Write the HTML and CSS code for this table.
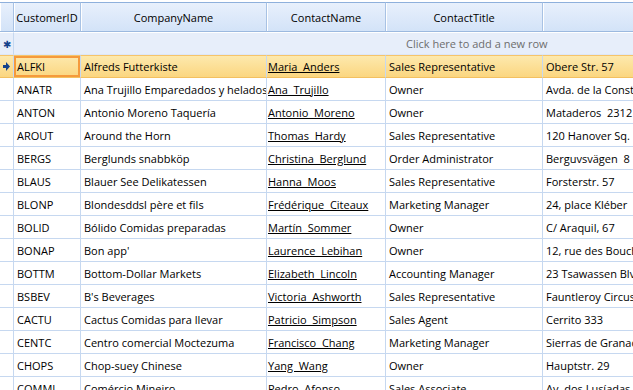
FILE: index.html
```html
<!DOCTYPE html>
<html>
<head>
<meta charset="utf-8">
<link rel="stylesheet" href="styles.css">
</head>
<body>
<div class="grid">
<table>
<colgroup>
<col class="c-ind"><col class="c-id"><col class="c-comp"><col class="c-name"><col class="c-title"><col class="c-addr">
</colgroup>
<thead>
<tr><th class="ind"></th><th>CustomerID</th><th>CompanyName</th><th>ContactName</th><th>ContactTitle</th><th></th></tr>
</thead>
<tbody>
<tr class="newrow"><td class="ind"><span class="star">✱</span></td><td colspan="5" class="addtext">Click here to add a new row</td></tr>
<tr class="sel"><td class="ind"><svg width="7" height="9" viewBox="0 0 7 9"><path d="M0 3h3V0l4 4.5L3 9V6H0z" fill="#15428b"/></svg></td><td class="cur">ALFKI</td><td>Alfreds Futterkiste</td><td class="nm"><u>Maria&nbsp; Anders</u></td><td>Sales Representative</td><td>Obere Str. 57</td></tr>
<tr><td class="ind"></td><td>ANATR</td><td>Ana Trujillo Emparedados y helados</td><td class="nm"><u>Ana&nbsp; Trujillo</u></td><td>Owner</td><td>Avda. de la Constitución 2222</td></tr>
<tr><td class="ind"></td><td>ANTON</td><td>Antonio Moreno Taquería</td><td class="nm"><u>Antonio&nbsp; Moreno</u></td><td>Owner</td><td>Mataderos&nbsp; 2312</td></tr>
<tr><td class="ind"></td><td>AROUT</td><td>Around the Horn</td><td class="nm"><u>Thomas&nbsp; Hardy</u></td><td>Sales Representative</td><td>120 Hanover Sq.</td></tr>
<tr><td class="ind"></td><td>BERGS</td><td>Berglunds snabbköp</td><td class="nm"><u>Christina&nbsp; Berglund</u></td><td>Order Administrator</td><td>Berguvsvägen&nbsp; 8</td></tr>
<tr><td class="ind"></td><td>BLAUS</td><td>Blauer See Delikatessen</td><td class="nm"><u>Hanna&nbsp; Moos</u></td><td>Sales Representative</td><td>Forsterstr. 57</td></tr>
<tr><td class="ind"></td><td>BLONP</td><td>Blondesddsl père et fils</td><td class="nm"><u>Frédérique&nbsp; Citeaux</u></td><td>Marketing Manager</td><td>24, place Kléber</td></tr>
<tr><td class="ind"></td><td>BOLID</td><td>Bólido Comidas preparadas</td><td class="nm"><u>Martín&nbsp; Sommer</u></td><td>Owner</td><td>C/ Araquil, 67</td></tr>
<tr><td class="ind"></td><td>BONAP</td><td>Bon app'</td><td class="nm"><u>Laurence&nbsp; Lebihan</u></td><td>Owner</td><td>12, rue des Bouchers</td></tr>
<tr><td class="ind"></td><td>BOTTM</td><td>Bottom-Dollar Markets</td><td class="nm"><u>Elizabeth&nbsp; Lincoln</u></td><td>Accounting Manager</td><td>23 Tsawassen Blvd.</td></tr>
<tr><td class="ind"></td><td>BSBEV</td><td>B's Beverages</td><td class="nm"><u>Victoria&nbsp; Ashworth</u></td><td>Sales Representative</td><td>Fauntleroy Circus</td></tr>
<tr><td class="ind"></td><td>CACTU</td><td>Cactus Comidas para llevar</td><td class="nm"><u>Patricio&nbsp; Simpson</u></td><td>Sales Agent</td><td>Cerrito 333</td></tr>
<tr><td class="ind"></td><td>CENTC</td><td>Centro comercial Moctezuma</td><td class="nm"><u>Francisco&nbsp; Chang</u></td><td>Marketing Manager</td><td>Sierras de Granada 9993</td></tr>
<tr><td class="ind"></td><td>CHOPS</td><td>Chop-suey Chinese</td><td class="nm"><u>Yang&nbsp; Wang</u></td><td>Owner</td><td>Hauptstr. 29</td></tr>
<tr><td class="ind"></td><td>COMMI</td><td>Comércio Mineiro</td><td class="nm"><u>Pedro&nbsp; Afonso</u></td><td>Sales Associate</td><td>Av. dos Lusíadas, 23</td></tr>
</tbody>
</table>
</div>
</body>
</html>
```
FILE: styles.css
```css
html, body { margin: 0; padding: 0; background: #fff; }
.grid {
  width: 633px;
  height: 390px;
  overflow: hidden;
  font-family: "Open Sans", "Noto Sans", sans-serif;
  font-size: 11px;
  color: #000;
  padding-top: 2px;
  box-sizing: border-box;
  background: #fff;
}
table {
  border-collapse: separate;
  border-spacing: 0;
  table-layout: fixed;
  width: 760px;
}
.c-ind { width: 14px; }
.c-id { width: 67px; }
.c-comp { width: 186px; }
.c-name { width: 119px; }
.c-title { width: 157px; }
.c-addr { width: 217px; }
th {
  height: 28px;
  padding: 0;
  font-weight: normal;
  text-align: center;
  background: linear-gradient(#e8f0fc, #d3e3f8);
  border-top: 1px solid #8eb0dc;
  border-bottom: 1px solid #9cb9df;
  border-right: 1px solid #a8c2e4;
  box-shadow: inset 1px 0 0 #fff;
  white-space: nowrap;
}
td {
  height: 22px;
  padding: 0 0 0 3px;
  border-right: 1px solid #c6d8f0;
  border-bottom: 1px solid #c6d8f0;
  white-space: nowrap;
  overflow: hidden;
}
td.nm { padding-left: 1px; }
td.ind {
  padding: 0;
  text-align: center;
  vertical-align: middle;
}
td.ind svg { display: block; margin: 0 auto; }
.newrow td {
  background: #e7eefa;
  height: 21px;
  border-top: 1px solid #fff;
  border-bottom: 1px solid #dde7f6;
}
.newrow td.ind { border-right: 1px solid #c6d8f0; }
.star { color: #15428b; font-size: 10px; }
.addtext {
  padding-left: 392px;
  color: #6d6d6d;
}
.sel td {
  background: linear-gradient(#fde9ad, #fbd680);
  border-top: 1px solid #f6c46a;
  border-bottom: 1px solid #f3c060;
  height: 21px;
}
.sel td.cur {
  box-shadow: inset 0 0 0 2px #f59a3c;
}
u { text-decoration: underline; }
```
